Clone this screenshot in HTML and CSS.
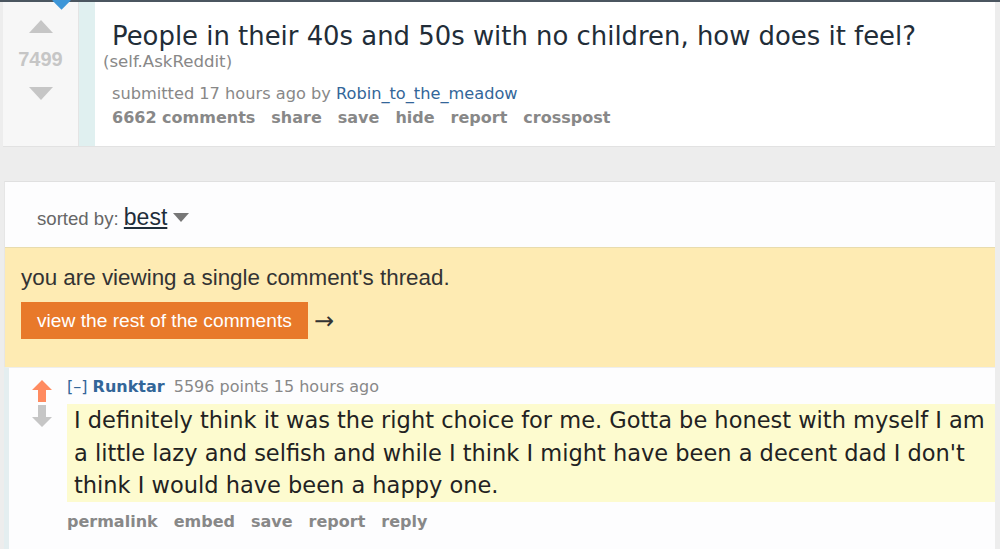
FILE: index.html
```html
<!DOCTYPE html>
<html>
<head>
<meta charset="utf-8">
<link rel="stylesheet" href="styles.css">
</head>
<body>
<div class="topline"></div>
<div class="marker"></div>
<div class="post">
  <div class="vote">
    <svg class="arrow" width="24" height="13" viewBox="0 0 24 13"><polygon points="12,0 24,13 0,13" fill="#c6c6c6"/></svg>
    <div class="score">7499</div>
    <svg class="arrow" width="24" height="13" viewBox="0 0 24 13"><polygon points="0,0 24,0 12,13" fill="#c6c6c6"/></svg>
  </div>
  <div class="stripe"></div>
  <div class="post-main">
    <div class="title">People in their 40s and 50s with no children, how does it feel?</div>
    <div class="domain">(self.AskReddit)</div>
    <div class="tagline">submitted 17 hours ago by <a class="user">Robin_to_the_meadow</a></div>
    <ul class="buttons">
      <li>6662 comments</li><li>share</li><li>save</li><li>hide</li><li>report</li><li>crosspost</li>
    </ul>
  </div>
</div>
<div class="comments">
  <div class="sort">sorted by: <span class="sort-val">best</span><span class="caret"></span></div>
  <div class="notice">
    <div class="notice-text">you are viewing a single comment's thread.</div>
    <div class="notice-row"><span class="btn">view the rest of the comments</span><span class="rarr">&rarr;</span></div>
  </div>
  <div class="comment">
    <div class="cvote">
      <svg width="20" height="22" viewBox="0 0 20 22"><polygon points="10,0 20,10 14,10 14,22 6,22 6,10 0,10" fill="#ff8b60"/></svg>
      <svg width="20" height="22" viewBox="0 0 20 22"><polygon points="6,0 14,0 14,12 20,12 10,22 0,12 6,12" fill="#c6c6c6"/></svg>
    </div>
    <div class="cmain">
      <div class="ctag"><span class="expand">[–]</span> <a class="author">Runktar</a> <span class="pts">5596 points 15 hours ago</span></div>
      <div class="cbody">I definitely think it was the right choice for me. Gotta be honest with myself I am a little lazy and selfish and while I think I might have been a decent dad I don't think I would have been a happy one.</div>
      <ul class="cbuttons"><li>permalink</li><li>embed</li><li>save</li><li>report</li><li>reply</li></ul>
    </div>
  </div>
</div>
</body>
</html>
```
FILE: styles.css
```css
html, body {
  margin: 0;
  padding: 0;
}
body {
  background: #ededed;
  width: 1000px;
  height: 549px;
  overflow: hidden;
  position: relative;
  font-family: "DejaVu Sans", Verdana, sans-serif;
}
.topline {
  height: 2px;
  background: #4b5660;
}
.marker {
  position: absolute;
  left: 55px;
  top: -6px;
  width: 13px;
  height: 13px;
  background: #3d96d8;
  transform: rotate(45deg);
}
.post {
  display: flex;
  margin: 0 5px 0 3px;
  height: 144px;
  background: #fff;
  border-bottom: 1px solid #e2e2e2;
}
.vote {
  width: 76px;
  background: #f7f7f7;
  border-right: 1px solid #e4e4e4;
  display: flex;
  flex-direction: column;
  align-items: center;
  padding-top: 18px;
  box-sizing: border-box;
}
.arrow { display: block; }
.score {
  font-family: "Liberation Sans", Arial, sans-serif;
  font-weight: bold;
  font-size: 20px;
  color: #c6c6c6;
  margin: 14px 0 16px;
  line-height: 24px;
}
.stripe {
  width: 16px;
  background: #e0f0f0;
}
.post-main {
  padding: 19px 0 0 17px;
}
.title {
  font-size: 25.9px;
  color: #222d38;
  line-height: 30px;
}
.domain {
  font-size: 16.6px;
  color: #888;
  margin-left: -9px;
  margin-top: 1px;
  line-height: 20px;
}
.tagline {
  font-size: 16.2px;
  color: #888;
  margin-top: 12px;
  line-height: 20px;
}
.user { color: #336699; }
.buttons, .cbuttons {
  list-style: none;
  margin: 4px 0 0;
  padding: 0;
  display: flex;
  gap: 16px;
  font-size: 16px;
  font-weight: bold;
  color: #888;
  line-height: 20px;
}
.comments {
  margin: 34px 5px 0 4px;
  background: #fdfdfe;
  border-top: 1px solid #e0e0e0;
  border-left: 1px solid #e6e6e6;
}
.sort {
  font-family: "Liberation Sans", Arial, sans-serif;
  font-size: 18.6px;
  color: #666;
  padding: 22px 0 0 32px;
  height: 43px;
}
.sort-val {
  font-size: 23px;
  color: #1f2d3a;
  text-decoration: underline;
}
.caret {
  display: inline-block;
  border-left: 8px solid transparent;
  border-right: 8px solid transparent;
  border-top: 9px solid #777;
  margin-left: 6px;
  vertical-align: 3px;
}
.notice {
  background: #feebb3;
  border-top: 1px solid #e8dcae;
  padding: 18px 0 0 16px;
  height: 120px;
  box-sizing: border-box;
  font-family: "Liberation Sans", Arial, sans-serif;
}
.notice-text {
  font-size: 22.4px;
  color: #333;
  line-height: 24px;
}
.notice-row {
  display: flex;
  align-items: center;
  margin-top: 12px;
}
.btn {
  background: #e8792a;
  color: #fff;
  font-size: 19.2px;
  padding: 0 16px;
  height: 37px;
  line-height: 37px;
}
.rarr {
  font-family: "DejaVu Sans", sans-serif;
  font-size: 24px;
  color: #333;
  margin-left: 6px;
}
.comment {
  display: flex;
  border-top: 1px solid #eee;
  border-left: 5px solid #e4eef0;
  margin-left: -1px;
  padding: 9px 0 20px;
}
.cvote {
  display: flex;
  flex-direction: column;
  gap: 3px;
  padding: 3px 0 0 23px;
  width: 35px;
}
.cvote svg { display: block; }
.cmain { flex: 1; }
.ctag {
  font-size: 16px;
  line-height: 20px;
  color: #888;
}
.expand { color: #369; }
.author { color: #336699; font-weight: bold; margin-right: 4px; }
.cbody {
  background: #fdfbcf;
  font-size: 22.5px;
  line-height: 32.5px;
  color: #222;
  padding: 0 0 0 7px;
  margin-top: 7px;
}
.cbuttons {
  margin-top: 10px;
}
```
